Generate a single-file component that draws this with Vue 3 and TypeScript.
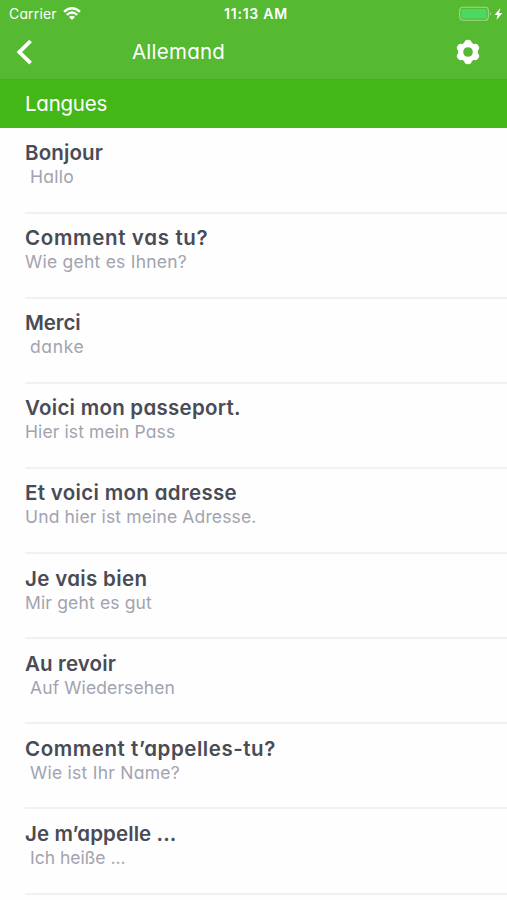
<script setup lang="ts">
interface Phrase {
  source: string
  translation: string
  indent: boolean
  sourceWidth: number
  translationWidth: number
}

const phrases: Phrase[] = [
  { source: 'Bonjour', translation: 'Hallo', indent: true, sourceWidth: 78, translationWidth: 43 },
  { source: 'Comment vas tu?', translation: 'Wie geht es Ihnen?', indent: false, sourceWidth: 182.5, translationWidth: 162 },
  { source: 'Merci', translation: 'danke', indent: true, sourceWidth: 55.5, translationWidth: 53.5 },
  { source: 'Voici mon passeport.', translation: 'Hier ist mein Pass', indent: false, sourceWidth: 215, translationWidth: 149.5 },
  { source: 'Et voici mon adresse', translation: 'Und hier ist meine Adresse.', indent: false, sourceWidth: 211, translationWidth: 231.5 },
  { source: 'Je vais bien', translation: 'Mir geht es gut', indent: false, sourceWidth: 121.5, translationWidth: 127 },
  { source: 'Au revoir', translation: 'Auf Wiedersehen', indent: true, sourceWidth: 91, translationWidth: 145 },
  { source: 'Comment t’appelles-tu?', translation: 'Wie ist Ihr Name?', indent: true, sourceWidth: 250, translationWidth: 149 },
  { source: 'Je m’appelle ...', translation: 'Ich heiße ...', indent: true, sourceWidth: 150.5, translationWidth: 95.5 },
]

const ctx = document.createElement('canvas').getContext('2d')!

// Letter spacing that sets a text to the given width.
function tracking(text: string, font: string, width: number) {
  ctx.font = `${font} Inter`
  return { letterSpacing: `${((width - ctx.measureText(text).width) / text.length).toFixed(3)}px` }
}
</script>

<template>
  <div class="screen">
    <header class="header">
      <div class="status">
        <div class="carrier">
          <span :style="tracking('Carrier', '400 14px', 47)">Carrier</span>
          <svg class="wifi" width="18" height="13" viewBox="0 0 18 13">
            <path d="M1 4.8Q9-2.3 17 4.8M3.8 7.8Q9 3.3 14.2 7.8" fill="none" stroke="#fff" stroke-width="2.4" />
            <path d="M6 9.9Q9 7.4 12 9.9L9 12.9Z" fill="#fff" />
          </svg>
        </div>
        <span class="clock" :style="tracking('11:13 AM', '600 14px', 64)">11:13 AM</span>
        <svg class="battery" width="44" height="16" viewBox="0 0 44 16">
          <rect x=".7" y="1.2" width="28.6" height="13" rx="3" fill="none" stroke="#a5d98c" stroke-width="1.1" />
          <rect x="2.3" y="2.9" width="25.3" height="9.7" rx="1.2" fill="#4bd964" />
          <path d="M30.8 5.5Q33 7.7 30.8 9.9Z" fill="#a5d98c" />
          <path d="M41.3 2L35.6 8.9H38.6L37.5 13.9L43.4 6.9H40.1Z" fill="#fff" />
        </svg>
      </div>
      <nav class="nav">
        <svg class="back" width="18" height="28" viewBox="0 0 18 28">
          <path d="M15.6 3L4.3 14.1L15.6 25.2" fill="none" stroke="#fff" stroke-width="3.8" stroke-linejoin="miter" />
        </svg>
        <h1 class="title" :style="tracking('Allemand', '400 20.5px', 92)">Allemand</h1>
        <svg class="gear" width="24" height="26" viewBox="-12 -13 24 26">
          <g fill="#fff">
            <circle r="10" />
            <circle v-for="a in [0, 60, 120, 180, 240, 300]" :key="a" cy="-8.4" r="3.8" :transform="`rotate(${a})`" />
          </g>
          <circle r="4.8" fill="#55b931" />
        </svg>
      </nav>
    </header>
    <h2 class="section"><span :style="tracking('Langues', '400 20.5px', 81)">Langues</span></h2>
    <ul class="list">
      <li v-for="p in phrases" :key="p.source" class="row">
        <p class="source" :style="tracking(p.source, '600 20.5px', p.sourceWidth)">{{ p.source }}</p>
        <p class="translation" :class="{ indent: p.indent }" :style="tracking(p.translation, '400 17.5px', p.translationWidth)">{{ p.translation }}</p>
      </li>
    </ul>
  </div>
</template>

<style>
body {
  background: #fff;
}
</style>

<style scoped>
.screen {
  width: 507px;
  height: 900px;
  overflow: hidden;
  background: #fefefe;
  font-family: Inter, 'Liberation Sans', sans-serif;
  font-feature-settings: 'cv11';
  white-space: nowrap;
}
.header {
  box-sizing: border-box;
  height: 80px;
  background: #55b931;
  border-bottom: 1px solid #49a829;
  color: #fff;
}
.status {
  display: grid;
  grid-template-columns: 1fr auto 1fr;
  align-items: center;
  height: 27px;
  padding: 0 4px 0 9px;
  font-size: 14px;
}
.carrier {
  display: flex;
  align-items: center;
  gap: 6px;
}
.clock {
  font-weight: 600;
}
.battery {
  justify-self: end;
}
.nav {
  display: flex;
  align-items: center;
  height: 50px;
  padding: 0 27px 0 15px;
}
.title {
  flex: 1;
  margin: 0 0 0 99px;
  padding-bottom: 2px;
  font-size: 20.5px;
  font-weight: 400;
}
.section {
  display: flex;
  align-items: center;
  height: 47.7px;
  margin: 0;
  padding-left: 25px;
  background: #44b718;
  color: #fff;
  font-size: 20.5px;
  font-weight: 400;
}
.list {
  margin: 0;
  padding: 1px 0 0 25px;
  list-style: none;
}
.row {
  box-sizing: border-box;
  height: 85.1px;
  padding-top: 12.4px;
  border-bottom: 2px solid #f1f1f2;
}
.source,
.translation {
  margin: 0;
  line-height: 24px;
}
.source {
  color: #494b55;
  font-size: 20.5px;
  font-weight: 600;
}
.translation {
  color: #a2a3af;
  font-size: 17.5px;
  font-weight: 400;
}
.indent {
  padding-left: 5px;
}
</style>
